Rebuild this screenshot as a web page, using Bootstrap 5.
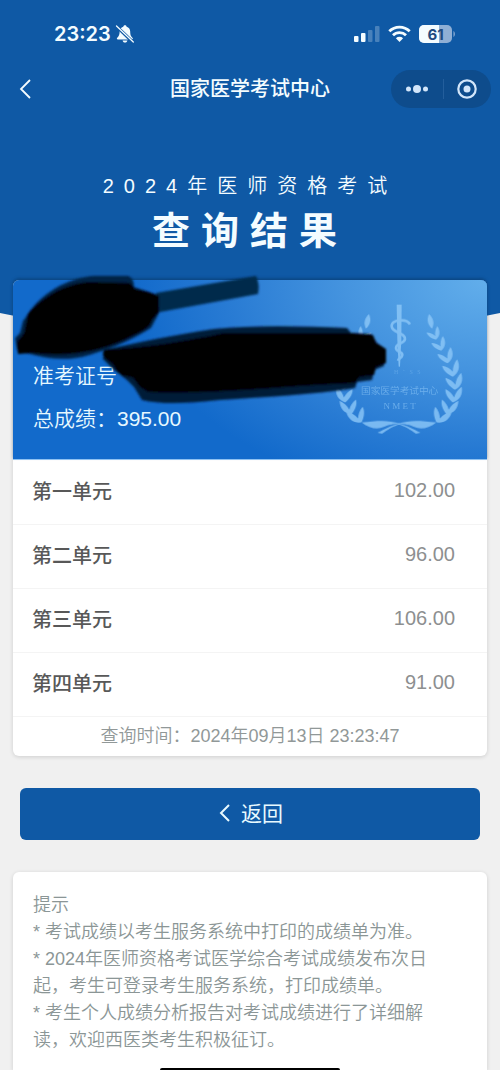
<!DOCTYPE html>
<html lang="zh-CN">
<head>
<meta charset="utf-8">
<meta name="viewport" content="width=device-width, initial-scale=1">
<title>国家医学考试中心</title>
<link rel="stylesheet" href="https://cdn.jsdelivr.net/npm/bootstrap@5.3.0/dist/css/bootstrap.min.css">
<style>
  :root { --brand: #0f59a5; --brand-dark: #0e4c8c; }
  body { background: #f0f0f0; font-family: "Liberation Sans", "Noto Sans CJK SC", sans-serif; color: #555; }
  .hero { background: var(--brand); color: #f4fcff; height: 313px; }
  /* shallow arc that closes the blue header */
  .hero::after { content: ""; position: absolute; left: 0; right: 0; top: 100%; height: 50px; background: var(--brand); clip-path: polygon(0 0, 100% 0, 50% 100%); }
  .status { height: 68px; padding: 0 44px 0 54px; }
  .clock { font: 600 20px/24px Inter, sans-serif; }
  .topbar { height: 41px; }
  .topbar h1 { font-size: 20px; line-height: 24px; font-weight: 500; }
  .icon-btn { background: none; border: 0; padding: 0; color: inherit; line-height: 0; }
  .capsule { background: var(--brand-dark); border-radius: 19px; height: 38px; width: 100px; right: 9px; color: #d3e6fa; }
  .capsule .icon-btn + .icon-btn { border-left: 1px solid #235e9c; height: 20px; }
  .exam { font-size: 20px; line-height: 28px; letter-spacing: 10px; padding-top: 63px; font-weight: 350; }
  .headline { font-size: 38px; line-height: 48px; letter-spacing: 11px; padding-top: 7px; font-weight: 700; }
  .panel { background: #fff; border: 0; border-radius: 6px; box-shadow: 0 1px 4px rgba(0,0,0,.14); margin: 0 13px; }
  .result { margin-top: -33px; }
  .summary { height: 180px; border-radius: 6px 6px 0 0; border-bottom: 1px solid #8fc2f2; color: #e6f8ff; font-size: 21px; line-height: 28px; padding: 82px 20px 0;
    background: radial-gradient(ellipse 75% 125% at 100% 0, #62aeeb 0, #4594df 40%, #277ad3 75%, rgba(18,106,203,0) 100%), #126acb; box-shadow: 0 -2px 3px rgba(10,50,90,.35); font-weight: 350; }
  .summary p + p { padding-top: 15px; }
  .emblem { right: 7px; top: 10px; }
  .marker { left: 0; top: -10px; }
  .scores { font-size: 20px; line-height: 28px; }
  .scores th, .scores td { height: 64px; padding: 0; border-bottom: 1px solid #f4f4f4; background: none; }
  .scores th { padding-left: 19px; font-weight: 500; color: #585858; }
  .scores td { padding: 0 32px 4px 0; color: #8d8f90; }
  .stamp { font-size: 18px; line-height: 39px; color: #919898; font-weight: 350; }
  .back { background: var(--brand); color: #e8faff; border: 0; border-radius: 6px; height: 52px; margin: 32px 20px; font-size: 21px; line-height: 28px; }
  .back:hover { background: var(--brand-dark); color: #fff; }
  .tips { border-radius: 6px 6px 0 0; padding: 20px 50px 6px 20px; font-size: 18px; line-height: 27px; color: #8b9696; font-weight: 350; }
  .home-bar { width: 36%; height: 2px; background: #000; border-radius: 2px 2px 0 0; }
</style>
</head>
<body>
<div class="d-flex flex-column min-vh-100 position-relative">
  <header class="hero position-relative">
    <div class="status d-flex align-items-center justify-content-between">
      <div class="d-flex align-items-center gap-1">
        <span class="clock">23:23</span>
        <svg width="20" height="20" viewBox="0 0 20 20" fill="currentColor" aria-hidden="true">
          <path d="M10 1.200c1 0 1.600.7 1.600 1.500 2.300.7 3.600 2.500 3.600 4.900 0 4 1.100 5 2.200 6.100.8.8.4 1.700-.6 1.700H2.900c-1 0-1.400-.9-.6-1.700 1.200-1.200 2.300-2.200 2.300-6.100 0-2.400 1.400-4.200 3.700-4.900C8.300 1.900 9 1.200 10 1.200zM7.600 16.500h4.800c-.2 1.300-1.100 2.100-2.400 2.100s-2.200-.8-2.400-2.100z"/>
          <path d="M2 2.800 17.800 18" stroke="#0f59a5" stroke-width="3.200"/>
          <path d="M1.500 2 18.300 18" stroke="currentColor" stroke-width="1.300" stroke-linecap="round"/>
        </svg>
      </div>
      <div class="d-flex align-items-center gap-2">
        <svg width="26" height="18" viewBox="0 0 26 18" fill="currentColor" aria-hidden="true">
          <rect y="11" width="4.500" height="6" rx="1"/><rect x="7" y="8" width="4.500" height="9" rx="1"/>
          <rect x="14" y="5" width="4.500" height="12" rx="1" opacity=".25"/><rect x="21" y="1" width="4.500" height="16" rx="1" opacity=".25"/>
        </svg>
        <svg width="23" height="18" viewBox="0 0 23 18" fill="none" stroke="currentColor" stroke-width="2.800" aria-hidden="true">
          <path d="M1.300 6.300a14.500 14.500 0 0 1 20.400 0M5 10.300a9.200 9.200 0 0 1 13 0"/>
          <path d="M11.500 17 7.900 13.300a5.200 5.200 0 0 1 7.200 0z" fill="currentColor" stroke="none"/>
        </svg>
        <svg width="37" height="18" viewBox="0 0 37 18" aria-label="61%">
          <rect width="33" height="18" rx="5" fill="#8fafd5"/>
          <path d="M5 0H20V18H5a5 5 0 0 1-5-5V5a5 5 0 0 1 5-5z" fill="#f4fcff"/>
          <path d="M34.500 6c1.800.7 1.800 5.300 0 6z" fill="#8fafd5"/>
          <text x="16.500" y="14.500" text-anchor="middle" font-family="Inter, sans-serif" font-size="15" font-weight="700" fill="#1f4b80">61</text>
        </svg>
      </div>
    </div>
    <nav class="topbar d-flex align-items-center justify-content-center position-relative" aria-label="小程序">
      <button type="button" class="icon-btn position-absolute start-0 ps-3" aria-label="返回上一页">
        <svg width="20" height="22" viewBox="0 0 20 22" fill="none" stroke="currentColor" stroke-width="1.800"><path d="M14 2 5 11l9 9"/></svg>
      </button>
      <h1 class="m-0">国家医学考试中心</h1>
      <div class="capsule position-absolute d-flex align-items-center">
        <button type="button" class="icon-btn flex-fill" aria-label="更多">
          <svg width="24" height="10" viewBox="0 0 24 10" fill="currentColor"><circle cx="3.500" cy="5" r="2.500"/><circle cx="12" cy="5" r="4"/><circle cx="20.500" cy="5" r="2.500"/></svg>
        </button>
        <button type="button" class="icon-btn flex-fill" aria-label="关闭">
          <svg width="20" height="20" viewBox="0 0 20 20"><circle cx="10" cy="10" r="8.700" fill="none" stroke="currentColor" stroke-width="2.200"/><circle cx="10" cy="10" r="3.500" fill="currentColor"/></svg>
        </button>
      </div>
    </nav>
    <p class="exam m-0 text-center">2024年医师资格考试</p>
    <h2 class="headline m-0 text-center">查询结果</h2>
  </header>

  <main class="d-flex flex-column flex-grow-1 position-relative">
    <section class="panel result">
      <div class="summary position-relative">
        <svg class="emblem position-absolute" width="150" height="150" viewBox="0 0 450 450" fill="#8ec8f8" aria-hidden="true">
          <defs>
            <path id="sprig" d="M2 14C-8 9-24 0-27-16-15-14-5-8 2 0 2-12 6-24 14-34 24-14 18 4 2 14z"/>
            <g id="branch">
              <path d="M297 72c14 14 17 28 9 44-13-12-17-26-9-44z"/>
              <use href="#sprig" transform="translate(314 138) rotate(-8) scale(.85)"/>
              <use href="#sprig" transform="translate(330 170) rotate(-8) scale(.9)"/>
              <use href="#sprig" transform="translate(350 206) rotate(-4)"/>
              <use href="#sprig" transform="translate(366 245) scale(1.100)"/>
              <use href="#sprig" transform="translate(374 284) rotate(6) scale(1.100)"/>
              <use href="#sprig" transform="translate(370 322) rotate(16) scale(1.100)"/>
              <use href="#sprig" transform="translate(354 358) rotate(28) scale(1.100)"/>
              <use href="#sprig" transform="translate(328 384) rotate(40) scale(1.150)"/>
              <path d="M205 401c35-12 65-9 114-4-23 19-48 22-66 14-16-7-28-9-48-10z"/>
              <path d="M205 400c25 5 44 17 67 28l-14 3c-15-10-33-23-57-29z"/>
            </g>
          </defs>
          <g opacity=".8">
            <use href="#branch"/>
            <use href="#branch" transform="translate(414 0) scale(-1 1)"/>
            <path d="M200 44h15l-1 105-4 81h-4l-4-81z"/>
            <path d="M240 103c-9-18-56-16-55 6 1 20 41 18 40 38-1 14-27 11-27 27 0 13 20 9 19 21-1 9-12 9-13 17" fill="none" stroke="#8ec8f8" stroke-width="8"/>
          </g>
          <g opacity=".6" text-anchor="middle">
            <text x="232" y="252" font-family="Liberation Serif, serif" font-size="18" opacity=".6">H &#160; ‘ &#160; S &#160; S</text>
            <text x="209" y="312" font-family="Noto Sans CJK SC, sans-serif" font-size="29">国家医学考试中心</text>
            <text x="209" y="357" font-family="Liberation Serif, serif" font-size="27">N M E T</text>
          </g>
        </svg>
        <p class="m-0">准考证号</p>
        <p class="m-0">总成绩：395.00</p>
        <svg class="marker position-absolute" width="380" height="140" viewBox="13 270 380 140" aria-hidden="true">
          <defs><filter id="soft" x="-5%" y="-5%" width="110%" height="110%"><feGaussianBlur stdDeviation="1"/></filter></defs>
          <g filter="url(#soft)">
            <path d="M156 293 256 276q4 8 2 18l-98 18z" fill="#04294b"/>
            <path d="M28 314c13-20 38-36 66-38h34q6 2 6 11l24 8 2 16-9 17c-24 15-47 23-69 29-20 4-38 1-56-4l-9-3-2-12 5-5 3-12z" fill="#022344"/>
            <path d="M28 314c14-17 38-31 62-32l40 1 5 6 13 3 11 4v16l-7 8c-2 10-17 14-28 20-24 11-49 16-82 14l-11-1-13 1-1-12 7-9z"/>
            <path d="M104 350c35-8 70-15 110-21 40-4 86-3 133-1l4 5 20 1 6 9 7 5v18l-10 4-2 10-15 2-2 6c-45 7-90 9-136 12-30 3-56 5-77 0l-8-13-7-7-14-11-10-10z" fill="#021c38"/>
            <path d="M104 350c46-3 83-9 120-17h124l25 2 3 8 10 6v14l-10 4-2 8-15 2-4 6c-65 2-137 12-207 9l-8-5-5-7q-2-4-12-4l-6-5-4-7-8-6-2-4z"/>
          </g>
        </svg>
      </div>
      <table class="scores table table-borderless align-middle m-0">
        <tbody>
          <tr><th scope="row">第一单元</th><td class="text-end">102.00</td></tr>
          <tr><th scope="row">第二单元</th><td class="text-end">96.00</td></tr>
          <tr><th scope="row">第三单元</th><td class="text-end">106.00</td></tr>
          <tr><th scope="row">第四单元</th><td class="text-end">91.00</td></tr>
        </tbody>
      </table>
      <p class="stamp m-0 text-center">查询时间：2024年09月13日 23:23:47</p>
    </section>

    <button type="button" class="btn back d-flex align-items-center justify-content-center gap-2">
      <svg width="16" height="20" viewBox="0 0 16 20" fill="none" stroke="currentColor" stroke-width="2" aria-hidden="true"><path d="M12 1 4 9l8 8"/></svg>返回
    </button>

    <section class="panel tips flex-grow-1">
      <p class="m-0">提示</p>
      <p class="m-0">* 考试成绩以考生服务系统中打印的成绩单为准。</p>
      <p class="m-0">* 2024年医师资格考试医学综合考试成绩发布次日起，考生可登录考生服务系统，打印成绩单。</p>
      <p class="m-0">* 考生个人成绩分析报告对考试成绩进行了详细解读，欢迎西医类考生积极征订。</p>
    </section>
  </main>
  <div class="home-bar position-absolute bottom-0 start-50 translate-middle-x"></div>
</div>
<script src="https://cdn.jsdelivr.net/npm/bootstrap@5.3.0/dist/js/bootstrap.bundle.min.js"></script>
</body>
</html>
